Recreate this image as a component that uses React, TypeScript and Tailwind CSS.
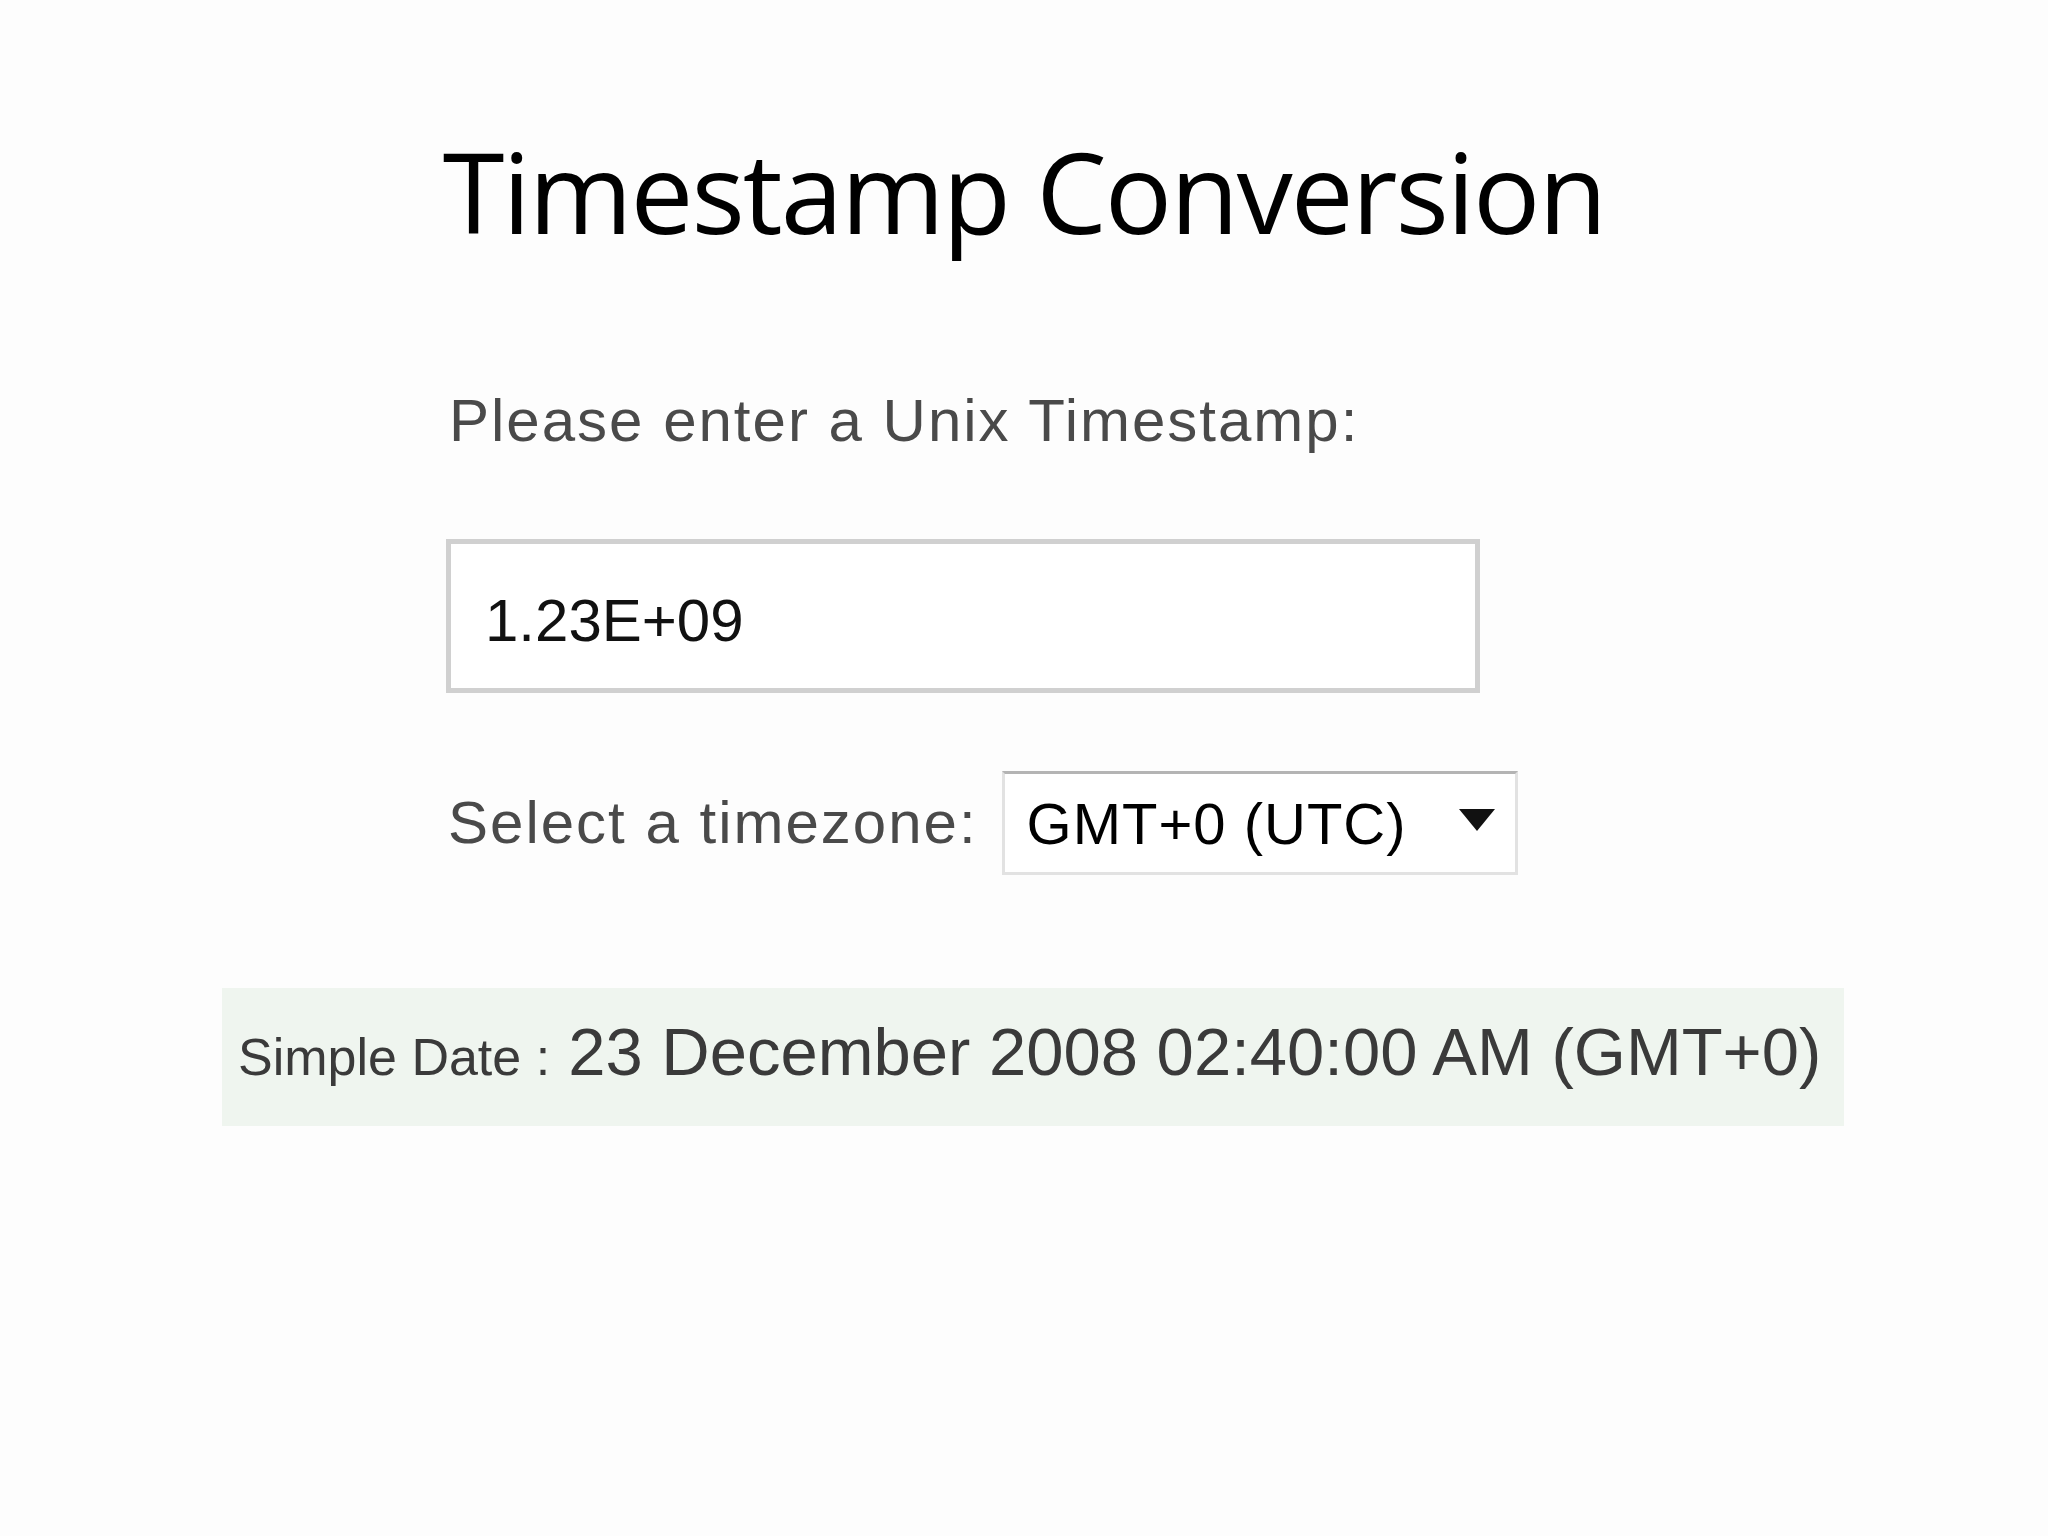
export default function App() {
  return (
    <div className="flex h-[1536px] w-[2048px] flex-col bg-[#fdfdfd]">
      {/* Heading */}
      <h1 className="mt-[126px] text-center font-['Open_Sans',sans-serif] text-[112px] leading-[130px] tracking-[-2px] text-black">
        Timestamp Conversion
      </h1>

      {/* Converter form */}
      <div className="ml-[446px] mt-[130px] flex flex-col font-['Liberation_Sans',Arial,sans-serif]">
        <label className="pl-[3px] text-[60px] leading-[70px] tracking-[2px] text-[#4a4a4a]">
          Please enter a Unix Timestamp:
        </label>

        <div className="mt-[83px] flex h-[154px] w-[1034px] items-center border-[5px] border-[#d0d0d0] bg-white pl-[34px] pt-[10px] text-[60px] text-[#111]">
          1.23E+09
        </div>

        <div className="mt-[78px] flex items-center">
          <span className="pl-[2px] text-[60px] tracking-[2px] text-[#4a4a4a]">
            Select a timezone:
          </span>
          <div className="ml-[24px] flex h-[104px] w-[516px] items-center justify-between border-[3px] border-[#e2e2e2] border-t-[#b4b4b4] bg-white pl-[22px] pr-[20px]">
            <span className="text-[58px] tracking-[1px] text-black">GMT+0 (UTC)</span>
            <svg width="36" height="22" viewBox="0 0 36 22" className="mt-[-6px]">
              <path d="M0 0H36L18 22Z" fill="#111" />
            </svg>
          </div>
        </div>
      </div>

      {/* Result */}
      <div className="ml-[222px] mt-[113px] flex h-[138px] w-[1622px] items-baseline whitespace-nowrap bg-[#eff5ef] pl-[16px] pt-[30px] font-['Liberation_Sans',Arial,sans-serif] text-[#3a3a3a]">
        <span className="text-[52px] leading-[68px]">Simple Date :</span>
        <span className="ml-[18px] text-[67px] leading-[68px]">
          23 December 2008 02:40:00 AM (GMT+0)
        </span>
      </div>
    </div>
  );
}
